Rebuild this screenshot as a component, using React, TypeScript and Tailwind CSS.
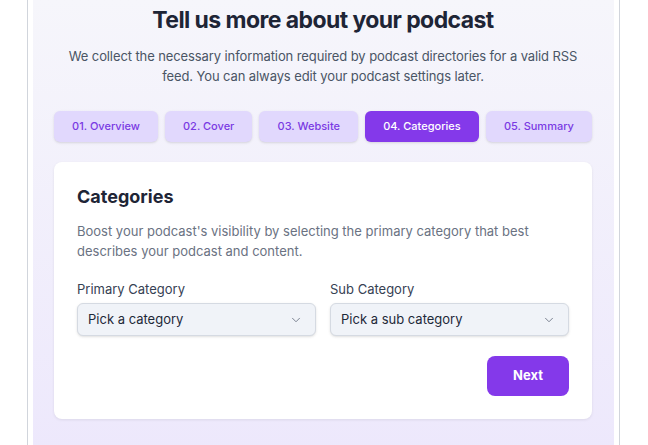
import { ChevronDown } from 'lucide-react';

const STEPS = ['01. Overview', '02. Cover', '03. Website', '04. Categories', '05. Summary'];
const ACTIVE = 3;

function Select({ label, placeholder }: { label: string; placeholder: string }) {
  return (
    <div className="flex-1 flex flex-col">
      <label className="text-[13px] leading-[18px] text-gray-700">{label}</label>
      <div className="mt-[5px] h-[33px] flex items-center justify-between bg-[#f0f3f8] border border-[#d5dae2] rounded-md pl-[10px] pr-[12px] shadow-sm">
        <span className="text-[13px] text-gray-800">{placeholder}</span>
        <ChevronDown size={14} strokeWidth={1.5} className="text-gray-500" />
      </div>
    </div>
  );
}

export default function App() {
  return (
    <div className="min-h-screen bg-white" style={{ fontFamily: 'Inter, "Noto Sans", sans-serif' }}>
      <div className="ml-[27px] w-[593px] min-h-screen border-x border-gray-300 px-[5px] flex">
        <div className="flex-1 bg-gradient-to-b from-[#f6f6fb] to-[#ede8fc] pl-[21px] pr-[22px] pb-8">
          {/* Header */}
          <h1 className="pt-[6px] text-center text-[23px] leading-[28px] font-bold text-[#1e2536] tracking-tight">
            Tell us more about your podcast
          </h1>
          <p className="mt-3 mx-auto max-w-[515px] text-center text-[13px] leading-[20px] text-gray-600 tracking-[-0.1px]">
            We collect the necessary information required by podcast directories for a valid RSS feed. You can always
            edit your podcast settings later.
          </p>

          {/* Steps */}
          <div className="mt-[25px] flex gap-[7px]">
            {STEPS.map((step, i) => (
              <div
                key={step}
                className={
                  i === ACTIVE
                    ? 'flex-auto h-[31px] px-4 rounded-md flex items-center justify-center text-[11px] font-medium bg-[#8439ea] text-white shadow-sm'
                    : 'flex-auto h-[31px] px-4 rounded-md flex items-center justify-center text-[11px] font-medium bg-[#e1d8fd] text-[#7a3ae3] shadow-sm'
                }
              >
                {step}
              </div>
            ))}
          </div>

          {/* Card */}
          <div className="mt-5 bg-white rounded-lg shadow-[0_1px_3px_rgba(0,0,0,0.08)] px-[23px] pt-[23px] pb-[23px]">
            <h2 className="text-[18px] leading-[24px] font-bold text-[#1e2536]">Categories</h2>
            <p className="mt-3 text-[13px] leading-[20px] text-gray-500">
              Boost your podcast's visibility by selecting the primary category that best describes your podcast and
              content.
            </p>
            <div className="mt-[19px] flex gap-[14px]">
              <Select label="Primary Category" placeholder="Pick a category" />
              <Select label="Sub Category" placeholder="Pick a sub category" />
            </div>
            <div className="mt-5 flex justify-end">
              <button className="w-[82px] h-[40px] rounded-lg bg-[#8439ea] text-white text-[13px] font-bold">
                Next
              </button>
            </div>
          </div>
        </div>
      </div>
    </div>
  );
}
